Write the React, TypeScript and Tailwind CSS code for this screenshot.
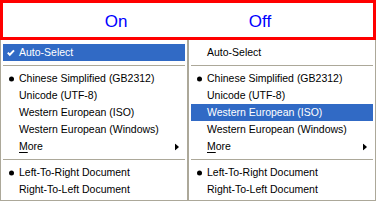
import React from "react";

type Item =
  | { kind: "sep" }
  | {
      kind: "item";
      label: React.ReactNode;
      mark?: "check" | "dot";
      arrow?: boolean;
      hi?: boolean;
    };

function Check({ white }: { white?: boolean }) {
  return (
    <svg width="8" height="8" viewBox="0 0 8 8" className="absolute left-[4px] top-1/2 -translate-y-1/2">
      <polyline
        points="0.8,3.6 2.8,5.8 7,1.4"
        fill="none"
        stroke={white ? "#ffffff" : "#000000"}
        strokeWidth="2"
      />
    </svg>
  );
}

function Menu({ items }: { items: Item[] }) {
  return (
    <div className="w-[188px] border-x border-b border-[#aca899] bg-white px-[2px] pt-[4px] pb-[2px]">
      {items.map((it, i) =>
        it.kind === "sep" ? (
          <div key={i} className="flex h-[9px] items-center">
            <div className="h-px w-full bg-[#aca899]" />
          </div>
        ) : (
          <div
            key={i}
            className={`relative flex h-[17px] items-center pl-[16px] ${
              it.hi ? "bg-[#316ac5] text-white" : "text-black"
            }`}
          >
            {it.mark === "check" && <Check white={it.hi} />}
            {it.mark === "dot" && (
              <span
                className={`absolute left-[6px] top-1/2 h-[5px] w-[5px] -translate-y-1/2 rounded-full ${
                  it.hi ? "bg-white" : "bg-black"
                }`}
              />
            )}
            <span className="whitespace-nowrap leading-none">{it.label}</span>
            {it.arrow && (
              <svg
                width="4"
                height="7"
                viewBox="0 0 4 7"
                className="absolute right-[6px] top-1/2 -translate-y-1/2"
              >
                <polygon points="0,0 4,3.5 0,7" fill={it.hi ? "#fff" : "#000"} />
              </svg>
            )}
          </div>
        )
      )}
    </div>
  );
}

function buildItems(autoHi: boolean, autoCheck: boolean, isoHi: boolean): Item[] {
  return [
    { kind: "item", label: "Auto-Select", mark: autoCheck ? "check" : undefined, hi: autoHi },
    { kind: "sep" },
    { kind: "item", label: "Chinese Simplified (GB2312)", mark: "dot" },
    { kind: "item", label: "Unicode (UTF-8)" },
    { kind: "item", label: "Western European (ISO)", hi: isoHi },
    { kind: "item", label: "Western European (Windows)" },
    {
      kind: "item",
      label: (
        <>
          <span className="underline underline-offset-[2px]">M</span>ore
        </>
      ),
      arrow: true,
    },
    { kind: "sep" },
    { kind: "item", label: "Left-To-Right Document", mark: "dot" },
    { kind: "item", label: "Right-To-Left Document" },
  ];
}

export default function App() {
  return (
    <div
      className="h-[201px] w-[376px] overflow-hidden bg-white text-[10.5px]"
      style={{ fontFamily: '"Liberation Sans", Arial, sans-serif' }}
    >
      <div className="flex h-[40px] items-center justify-center gap-[64px] border-[3px] border-[#ff0000] bg-white pt-[3px] text-[17px] text-[#0000ff]">
        <div className="w-[80px] text-center">On</div>
        <div className="w-[80px] text-center">Off</div>
      </div>
      <div className="flex">
        <Menu items={buildItems(true, true, false)} />
        <Menu items={buildItems(false, false, true)} />
      </div>
    </div>
  );
}
